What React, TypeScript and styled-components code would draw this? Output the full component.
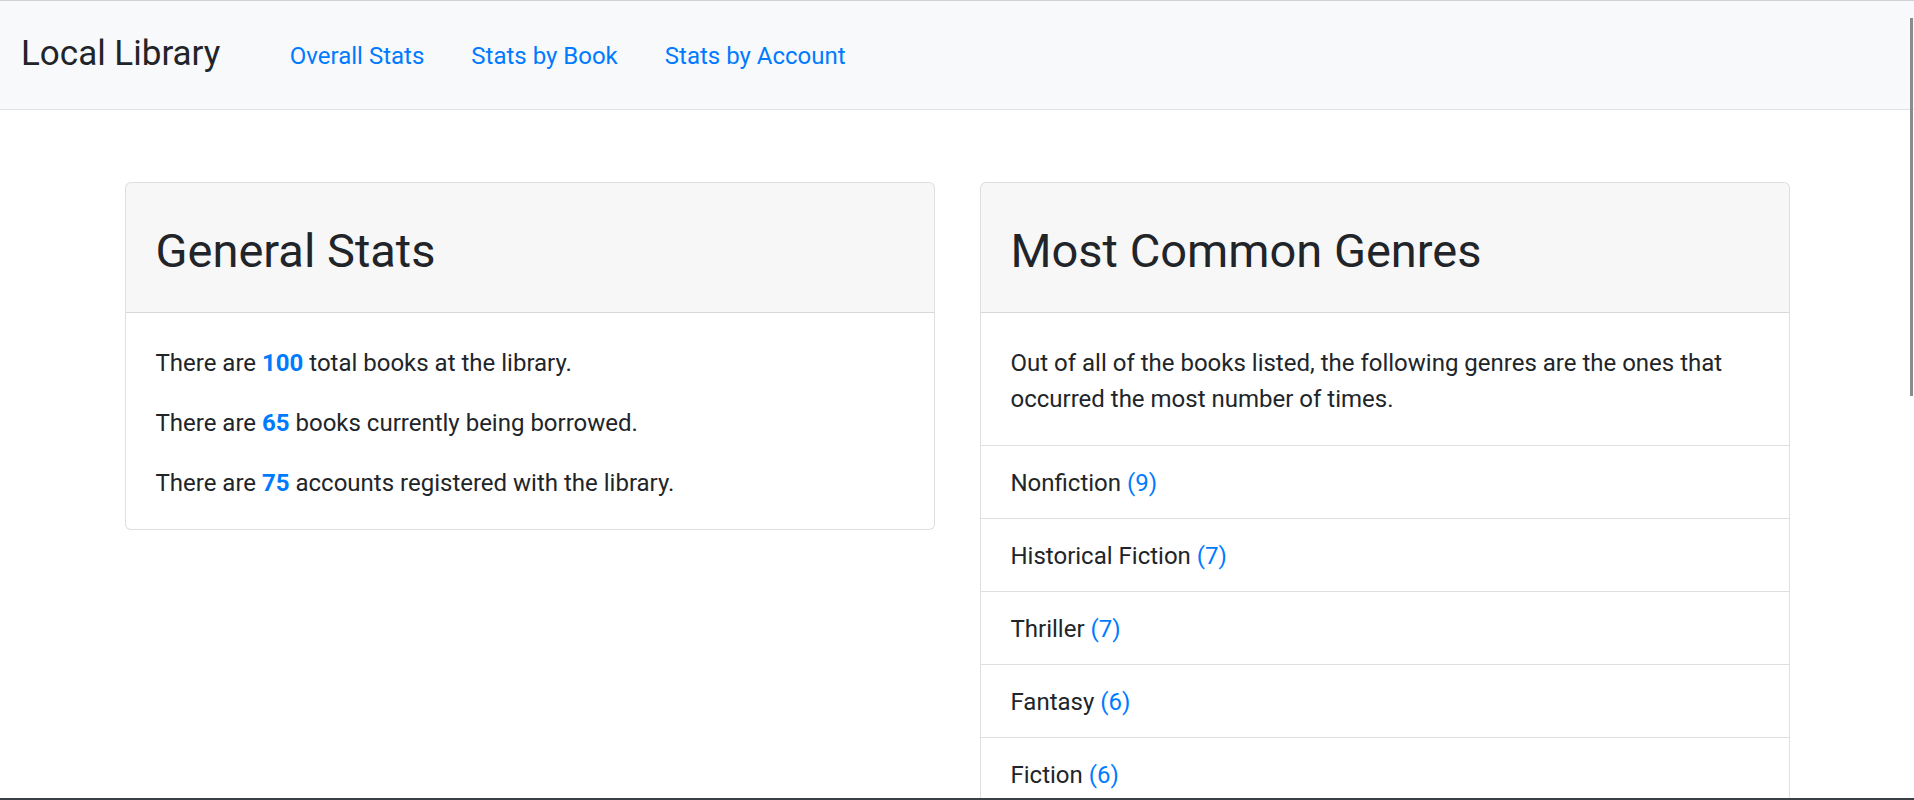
import React from "react";
import styled, { createGlobalStyle } from "styled-components";

const GlobalStyle = createGlobalStyle`
  html, body {
    margin: 0;
    padding: 0;
    background: #ffffff;
    overflow: hidden;
  }
  body {
    font-family: Roboto, "Helvetica Neue", "Liberation Sans", Arial, sans-serif;
    font-size: 24px;
    line-height: 1.5;
    color: #212529;
  }
  * { box-sizing: border-box; }
`;

const Navbar = styled.nav`
  display: flex;
  align-items: center;
  height: 110px;
  padding: 2px 24px 0 21px;
  background: #f8f9fa;
  border-top: 1px solid #cfd1d4;
  border-bottom: 1px solid #dee2e6;
`;

const Brand = styled.a`
  font-size: 35px;
  line-height: 54px;
  color: #212529;
  text-decoration: none;
  margin-right: 46px;
  margin-top: -4px;
  white-space: nowrap;
`;

const NavList = styled.ul`
  display: flex;
  list-style: none;
  margin: 0;
  padding: 0;
`;

const NavLink = styled.a`
  display: block;
  padding: 0 23.5px;
  font-size: 24px;
  line-height: 36px;
  color: #007bff;
  text-decoration: none;
  white-space: nowrap;
`;

const Container = styled.main`
  max-width: 1710px;
  margin: 72px auto 0;
  padding: 0 22.5px;
`;

const Row = styled.div`
  display: grid;
  grid-template-columns: 1fr 1fr;
  column-gap: 45px;
  align-items: start;
`;

const Card = styled.section`
  display: flex;
  flex-direction: column;
  background: #ffffff;
  border: 1px solid rgba(0, 0, 0, 0.125);
  border-radius: 6px;
  overflow: hidden;
`;

const CardHeader = styled.header`
  padding: 39px 30px 32px;
  background: rgba(0, 0, 0, 0.03);
  border-bottom: 1px solid rgba(0, 0, 0, 0.125);
`;

const CardTitle = styled.h2`
  margin: 0;
  font-size: 47px;
  line-height: 58px;
  font-weight: 400;
  color: #212529;
`;

const CardBody = styled.div`
  padding: 32px 30px 28px;
`;

const Text = styled.p<{ $last?: boolean }>`
  margin: 0 0 ${(p) => (p.$last ? "0" : "24px")};
  font-size: 24px;
  line-height: 36px;
`;

const Highlight = styled.strong`
  color: #007bff;
  font-weight: 700;
`;

const Count = styled.span`
  color: #007bff;
`;

const List = styled.ul`
  list-style: none;
  margin: 0;
  padding: 0;
  border-top: 1px solid rgba(0, 0, 0, 0.125);
`;

const ListItem = styled.li`
  padding: 19px 30px 17px;
  font-size: 24px;
  line-height: 36px;
  border-bottom: 1px solid rgba(0, 0, 0, 0.125);
  &:last-child {
    border-bottom: 0;
  }
`;

const ScrollThumb = styled.div`
  position: fixed;
  top: 18px;
  right: 1px;
  width: 3px;
  height: 378px;
  background: #8b8b8b;
`;

const BottomEdge = styled.div`
  position: fixed;
  left: 0;
  right: 0;
  bottom: 0;
  height: 2px;
  background: #394046;
`;

const genres = [
  { name: "Nonfiction", count: 9 },
  { name: "Historical Fiction", count: 7 },
  { name: "Thriller", count: 7 },
  { name: "Fantasy", count: 6 },
  { name: "Fiction", count: 6 },
];

export default function App() {
  return (
    <>
      <GlobalStyle />
      <Navbar>
        <Brand href="#">Local Library</Brand>
        <NavList>
          <li>
            <NavLink href="#">Overall Stats</NavLink>
          </li>
          <li>
            <NavLink href="#">Stats by Book</NavLink>
          </li>
          <li>
            <NavLink href="#">Stats by Account</NavLink>
          </li>
        </NavList>
      </Navbar>
      <Container>
        <Row>
          <Card>
            <CardHeader>
              <CardTitle>General Stats</CardTitle>
            </CardHeader>
            <CardBody>
              <Text>
                There are <Highlight>100</Highlight> total books at the library.
              </Text>
              <Text>
                There are <Highlight>65</Highlight> books currently being borrowed.
              </Text>
              <Text $last>
                There are <Highlight>75</Highlight> accounts registered with the library.
              </Text>
            </CardBody>
          </Card>
          <Card>
            <CardHeader>
              <CardTitle>Most Common Genres</CardTitle>
            </CardHeader>
            <CardBody>
              <Text $last>
                Out of all of the books listed, the following genres are the ones that
                occurred the most number of times.
              </Text>
            </CardBody>
            <List>
              {genres.map((g) => (
                <ListItem key={g.name}>
                  {g.name} <Count>({g.count})</Count>
                </ListItem>
              ))}
            </List>
          </Card>
        </Row>
      </Container>
      <ScrollThumb />
      <BottomEdge />
    </>
  );
}
